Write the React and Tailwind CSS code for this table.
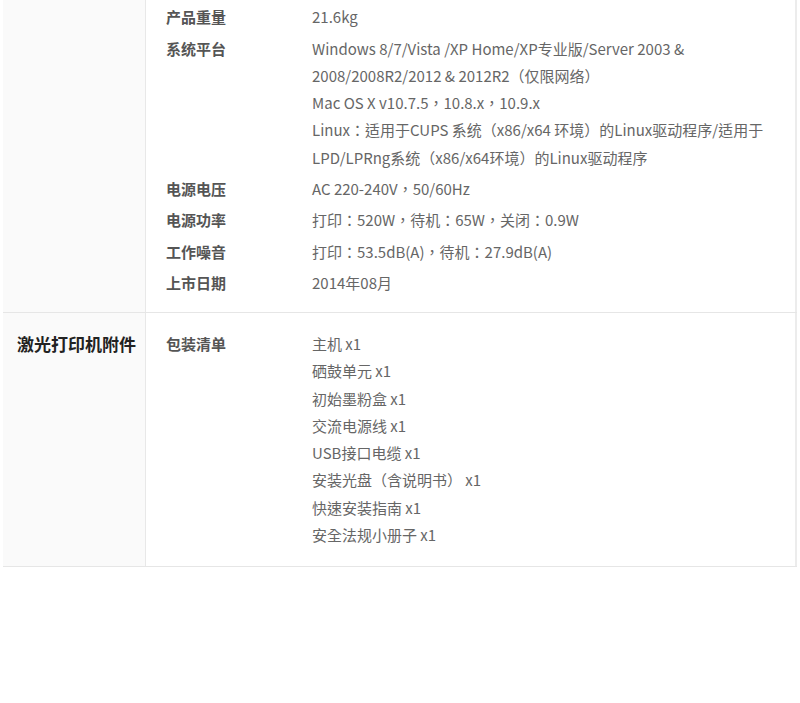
const specs = [
  { label: '产品重量', lines: ['21.6kg'] },
  {
    label: '系统平台',
    lines: [
      'Windows 8/7/Vista /XP Home/XP专业版/Server 2003 &',
      '2008/2008R2/2012 & 2012R2（仅限网络）',
      'Mac OS X v10.7.5，10.8.x，10.9.x',
      'Linux：适用于CUPS 系统（x86/x64 环境）的Linux驱动程序/适用于',
      'LPD/LPRng系统（x86/x64环境）的Linux驱动程序',
    ],
  },
  { label: '电源电压', lines: ['AC 220-240V，50/60Hz'] },
  { label: '电源功率', lines: ['打印：520W，待机：65W，关闭：0.9W'] },
  { label: '工作噪音', lines: ['打印：53.5dB(A)，待机：27.9dB(A)'] },
  { label: '上市日期', lines: ['2014年08月'] },
];

const accessories = [
  '主机 x1',
  '硒鼓单元 x1',
  '初始墨粉盒 x1',
  '交流电源线 x1',
  'USB接口电缆 x1',
  '安装光盘（含说明书） x1',
  '快速安装指南 x1',
  '安全法规小册子 x1',
];

const font = { fontFamily: '"Noto Sans CJK SC", "Microsoft YaHei", sans-serif' };
// centred full-width punctuation, like YaHei
const valueFont = { fontFamily: '"Noto Sans CJK TC", "Noto Sans CJK SC", sans-serif' };

const SpecRow = ({ label, lines }) => (
  <div className="flex py-[2px]">
    <div className="w-[166px] shrink-0 pl-5 font-bold text-[15px] leading-[27.5px] text-[#555]">{label}</div>
    <div className="text-[15px] leading-[27.3px] text-[#666]" style={valueFont}>
      {lines.map((l, i) => (
        <div key={i}>{l}</div>
      ))}
    </div>
  </div>
);

export default function App() {
  return (
    <div className="w-[800px] h-[703px] bg-white pl-[3px]" style={font}>
      <div className="w-[794px]">
        {/* section 1 */}
        <div className="flex border-b border-[#e6e6e6]">
          <div className="w-[143px] shrink-0 bg-[#fafafa] border-r border-[#e8e8e8]"></div>
          <div className="flex-1 pt-[1px] pb-[13px] border-r-2 border-[#ececec]">
            {specs.map(s => (
              <SpecRow key={s.label} {...s} />
            ))}
          </div>
        </div>

        {/* section 2 */}
        <div className="flex border-b border-[#e6e6e6]">
          <div className="w-[143px] shrink-0 bg-[#fafafa] border-r border-[#e8e8e8] pl-[14px] pt-[17px]">
            <div className="font-bold text-[17px] leading-[27px] text-[#222]">激光打印机附件</div>
          </div>
          <div className="flex-1 pt-[15px] pb-[16px] border-r-2 border-[#ececec]">
            <SpecRow label="包装清单" lines={accessories} />
          </div>
        </div>
      </div>
    </div>
  );
}
